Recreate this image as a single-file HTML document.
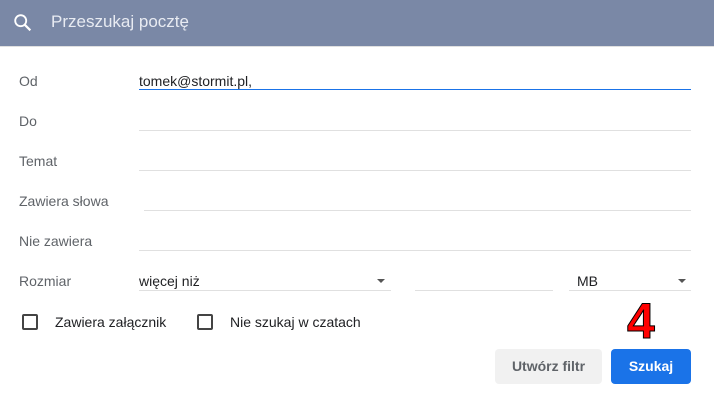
<!DOCTYPE html><html><head><style>
body{margin:0;width:714px;height:400px;background:#fff;font-family:"Liberation Sans",Arial,sans-serif;position:relative;overflow:hidden}
.hdr{position:absolute;left:0;top:0;width:714px;height:46px;background:#7a88a6;border-bottom:1px solid #e0e0e0}
.hdr span{position:absolute;left:51px;top:12px;font-size:17px;color:#e8ebf2}
.l{position:absolute;left:19px;font-size:14px;color:#5f6368}
.ln{position:absolute;height:1px;background:#e0e0e0}
.t{position:absolute;font-size:14px;color:#202124}
.cb{position:absolute;width:12px;height:12px;border:2px solid #444;border-radius:2px;top:314px}
.btn{position:absolute;top:349px;height:35px;border-radius:4px;font-size:14px;font-weight:bold;text-align:center;line-height:35px}
.arr{position:absolute;width:0;height:0;border-left:4px solid transparent;border-right:4px solid transparent;border-top:4px solid #555;top:279px}
</style></head><body>
<div class="hdr"><svg style="position:absolute;left:12px;top:12px" width="22" height="22" viewBox="0 0 24 24"><circle cx="9.5" cy="9.5" r="6" fill="none" stroke="#fff" stroke-width="2"/><path d="M14 14l6 6" stroke="#fff" stroke-width="2.4"/></svg><span>Przeszukaj pocztę</span></div>
<div class="l" style="top:73px">Od</div><div class="t" style="left:139px;top:73px">tomek@stormit.pl,</div><div class="ln" style="left:139px;width:552px;top:89px;background:#1a73e8"></div>
<div class="l" style="top:113px">Do</div><div class="ln" style="left:139px;width:552px;top:130px"></div>
<div class="l" style="top:153px">Temat</div><div class="ln" style="left:139px;width:552px;top:170px"></div>
<div class="l" style="top:193px">Zawiera słowa</div><div class="ln" style="left:144px;width:547px;top:210px"></div>
<div class="l" style="top:233px">Nie zawiera</div><div class="ln" style="left:139px;width:552px;top:250px"></div>
<div class="l" style="top:273px">Rozmiar</div>
<div class="t" style="left:139px;top:273px">więcej niż</div><div class="arr" style="left:377px"></div><div class="ln" style="left:139px;width:252px;top:290px"></div>
<div class="ln" style="left:415px;width:138px;top:290px"></div>
<div class="t" style="left:577px;top:273px">MB</div><div class="arr" style="left:678px"></div><div class="ln" style="left:569px;width:122px;top:290px"></div>
<div class="cb" style="left:22px"></div><div class="t" style="left:55px;top:314px">Zawiera załącznik</div>
<div class="cb" style="left:197px"></div><div class="t" style="left:230px;top:314px">Nie szukaj w czatach</div>
<div style="position:absolute;left:627px;top:296px;font-size:50px;font-weight:bold;color:#f00;-webkit-text-stroke:1px #000;line-height:50px">4</div>
<div class="btn" style="left:495px;width:107px;background:#f1f1f1;color:#5f6368">Utwórz filtr</div>
<div class="btn" style="left:611px;width:80px;background:#1a73e8;color:#fff">Szukaj</div>
</body></html>
